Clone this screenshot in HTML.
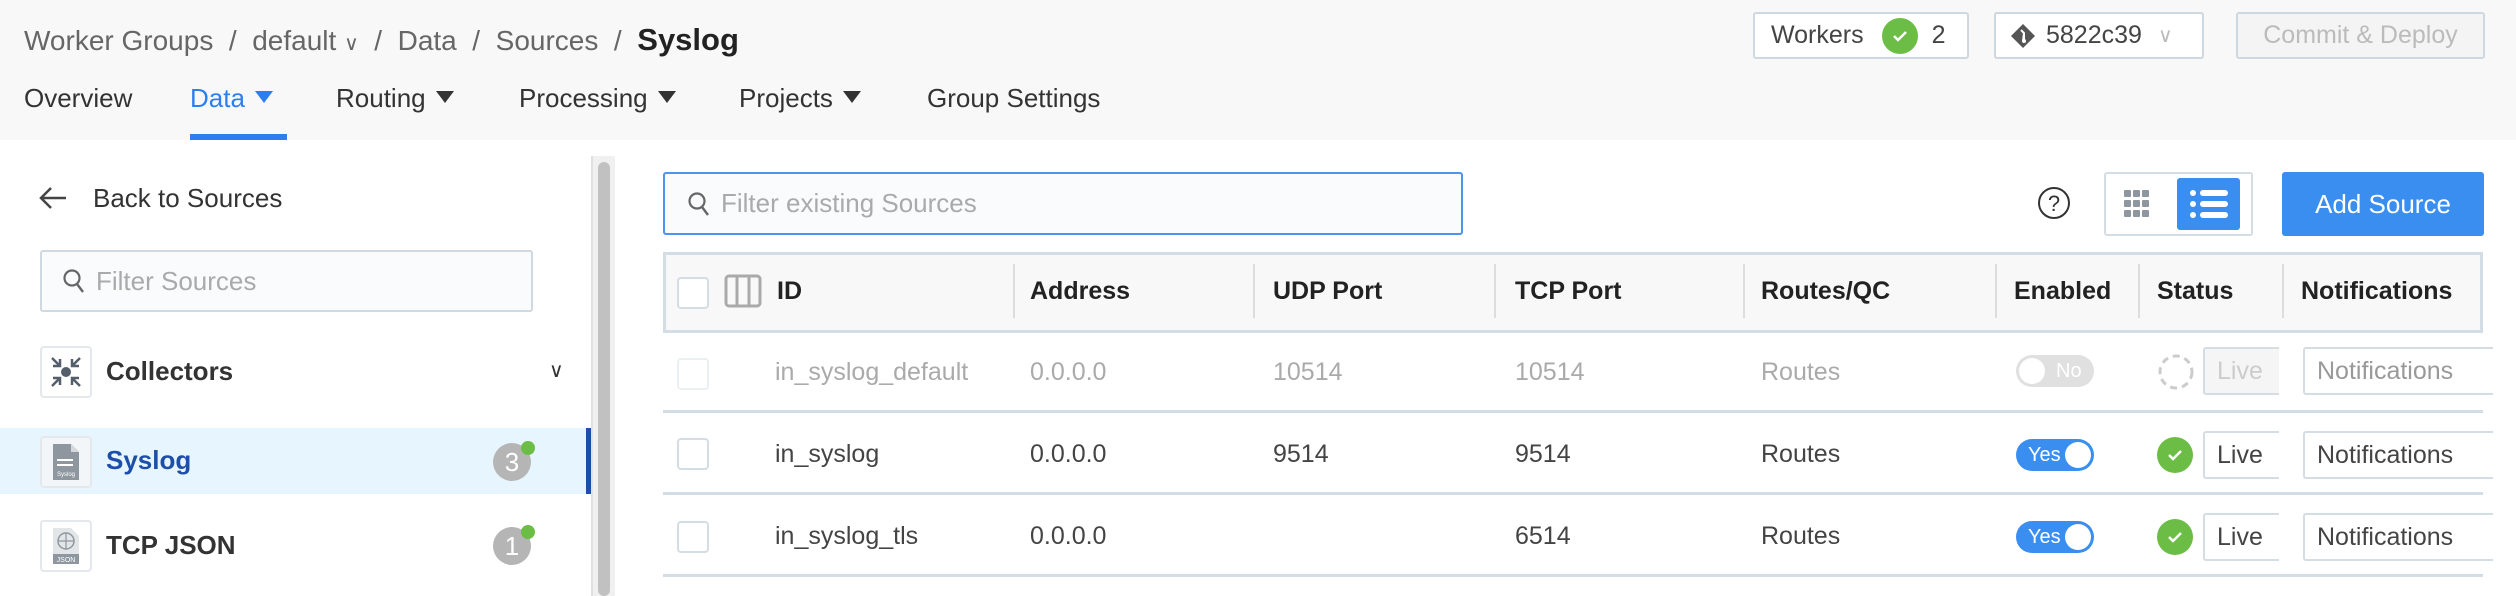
<!DOCTYPE html>
<html><head><meta charset="utf-8"><style>
*{box-sizing:border-box;margin:0;padding:0}
body{width:2516px;height:596px;overflow:hidden;background:#fff;font-family:"Liberation Sans",sans-serif;color:#444;position:relative}
.a{position:absolute}
.top{left:0;top:0;width:2516px;height:140px;background:#f8f8f8}
.bc{font-size:28px;color:#666;top:22px;left:24px;white-space:nowrap}
.bc b{color:#222;font-size:31px}
.tab{top:83px;font-size:26px;color:#333;white-space:nowrap}
.tri{display:inline-block;width:0;height:0;border-left:9px solid transparent;border-right:9px solid transparent;border-top:12px solid #333;margin-left:10px;vertical-align:4px}
.btn{border:2px solid #cfd8e0;border-radius:3px;background:#fff;font-size:25px;display:flex;align-items:center}
.chk{width:36px;height:36px;border-radius:50%;background:#6cbd45;display:inline-flex;align-items:center;justify-content:center}
.inp{border:2px solid #d0d8e0;border-radius:3px;background:#f9fbfd;font-size:26px;color:#aaa;display:flex;align-items:center}
.th{font-size:25px;color:#222;font-weight:bold;top:277px}
.sep{width:2px;height:54px;background:#ddd;top:264px}
.hl{height:3px;background:#d5dde4;left:663px;width:1820px}
.td{font-size:25px;color:#444}
.cb{width:32px;height:32px;border:2px solid #d5dde4;border-radius:4px;background:#fff}
.tg{width:78px;height:32px;border-radius:16px;background:#3a8ef0;color:#fff;font-size:20px;padding-left:12px;line-height:32px}
.tg i{position:absolute;right:3px;top:3px;width:26px;height:26px;border-radius:50%;background:#fff}
.lv{width:76px;height:48px;border:2px solid #d5dde4;border-right:none;border-radius:3px 0 0 3px;font-size:25px;padding-left:12px;line-height:44px;background:#fff}
.nt{width:190px;height:48px;border:2px solid #d5dde4;border-right:none;border-radius:3px 0 0 3px;font-size:25px;padding-left:12px;line-height:44px;background:#fff}
.ib{width:52px;height:52px;border:2px solid #e4e8ec;border-radius:4px;background:#fff;display:flex;align-items:center;justify-content:center}
.badge{width:38px;height:38px;border-radius:50%;background:#b5b5b5;color:#fff;font-size:26px;text-align:center;line-height:38px}
.badge i{position:absolute;right:-4px;top:-2px;width:14px;height:14px;border-radius:50%;background:#6cbd45}
</style></head><body>
<div class="a top"></div>
<div class="a bc">Worker Groups &nbsp;/ &nbsp;default <span style="font-size:20px">&#8744;</span> &nbsp;/ &nbsp;Data &nbsp;/ &nbsp;Sources &nbsp;/ &nbsp;<b>Syslog</b></div>
<div class="a tab" style="left:24px">Overview</div>
<div class="a tab" style="left:190px;color:#2d7ff0">Data<span class="tri" style="border-top-color:#2d7ff0"></span></div>
<div class="a" style="left:190px;top:134px;width:97px;height:6px;background:#2d7ff0"></div>
<div class="a tab" style="left:336px">Routing<span class="tri"></span></div>
<div class="a tab" style="left:519px">Processing<span class="tri"></span></div>
<div class="a tab" style="left:739px">Projects<span class="tri"></span></div>
<div class="a tab" style="left:927px">Group Settings</div>

<div class="a btn" style="left:1753px;top:12px;width:216px;height:47px;padding-left:16px;color:#444">Workers<span class="chk" style="margin:0 14px 0 18px"><svg width="18" height="14" viewBox="0 0 18 14"><path d="M3 7l4 4 8-8" stroke="#fff" stroke-width="2.5" fill="none"/></svg></span>2</div>
<div class="a btn" style="left:1994px;top:12px;width:210px;height:47px;padding-left:14px;color:#444"><svg width="26" height="26" viewBox="0 0 26 26"><path d="M13 1l12 12-12 12L1 13z" fill="#555"/><path d="M11 7l3 3v8M14 10l-1 8" stroke="#fff" stroke-width="2" fill="none"/><circle cx="14" cy="18" r="2" fill="#fff"/></svg><span style="margin-left:10px">5822c39</span><span style="margin-left:16px;color:#bbb;font-size:20px">&#8744;</span></div>
<div class="a btn" style="left:2236px;top:12px;width:249px;height:47px;background:#f4f4f4;color:#bbb;justify-content:center">Commit &amp; Deploy</div>

<!-- sidebar -->
<svg class="a" style="left:38px;top:184px" width="30" height="28" viewBox="0 0 30 28"><path d="M28 14H4M13 4L3 14l10 10" stroke="#444" stroke-width="2.5" fill="none"/></svg>
<div class="a" style="left:93px;top:183px;font-size:26px;color:#333">Back to Sources</div>
<div class="a inp" style="left:40px;top:250px;width:493px;height:62px;padding-left:20px"><svg width="24" height="26" viewBox="0 0 24 26"><circle cx="10" cy="10" r="7.5" stroke="#666" stroke-width="2.2" fill="none"/><path d="M15 16l6 8" stroke="#666" stroke-width="2.4"/></svg><span style="margin-left:10px">Filter Sources</span></div>

<div class="a ib" style="left:40px;top:346px"><svg width="36" height="36" viewBox="0 0 36 36" stroke="#555f6b" stroke-width="2.5" fill="none"><circle cx="18" cy="18" r="5" fill="#555f6b" stroke="none"/><path d="M4 4l8 8M12 5v7H5M32 4l-8 8M24 5v7h7M4 32l8-8M12 31v-7H5M32 32l-8-8M24 31v-7h7"/></svg></div>
<div class="a" style="left:106px;top:356px;font-size:26px;font-weight:bold;color:#333">Collectors</div>
<div class="a" style="left:549px;top:358px;font-size:20px;color:#333">&#8744;</div>

<div class="a" style="left:0;top:428px;width:590px;height:66px;background:#e7f5fe"></div>
<div class="a" style="left:586px;top:428px;width:5px;height:66px;background:#1d4fa8"></div>
<div class="a ib" style="left:40px;top:436px;background:#f3f6f9"><svg width="30" height="40" viewBox="0 0 30 40"><path d="M2 2h18l8 8v28H2z" fill="#8e979f"/><path d="M20 2v8h8" fill="#d5d9dd"/><path d="M6 18h16M6 23h16" stroke="#fff" stroke-width="2"/><text x="15" y="34" font-size="6" fill="#fff" text-anchor="middle" font-family="Liberation Sans">Syslog</text></svg></div>
<div class="a" style="left:106px;top:445px;font-size:26px;font-weight:bold;color:#1d4fa8">Syslog</div>
<div class="a badge" style="left:493px;top:443px">3<i></i></div>

<div class="a ib" style="left:40px;top:520px"><svg width="30" height="40" viewBox="0 0 30 40"><path d="M2 2h18l8 8v28H2z" fill="#e3e6e9"/><circle cx="15" cy="15" r="8" stroke="#8e979f" stroke-width="1.5" fill="none"/><path d="M7 15h16M15 7v16" stroke="#8e979f" stroke-width="1.2"/><rect x="2" y="28" width="26" height="10" fill="#8e979f"/><text x="15" y="36" font-size="7" fill="#fff" text-anchor="middle" font-family="Liberation Sans">JSON</text></svg></div>
<div class="a" style="left:106px;top:530px;font-size:26px;font-weight:bold;color:#333">TCP JSON</div>
<div class="a badge" style="left:493px;top:527px">1<i></i></div>

<div class="a" style="left:591px;top:156px;width:24px;height:440px;background:#f0f0f0;border-left:2px solid #e0e0e0"></div>
<div class="a" style="left:598px;top:162px;width:12px;height:434px;background:#c1c1c1;border-radius:6px"></div>

<!-- main -->
<div class="a inp" style="left:663px;top:172px;width:800px;height:63px;border-color:#4a95f0;padding-left:22px"><svg width="24" height="26" viewBox="0 0 24 26"><circle cx="10" cy="10" r="7.5" stroke="#666" stroke-width="2.2" fill="none"/><path d="M15 16l6 8" stroke="#666" stroke-width="2.4"/></svg><span style="margin-left:10px">Filter existing Sources</span></div>
<svg class="a" style="left:2036px;top:185px" width="36" height="36" viewBox="0 0 36 36"><circle cx="18" cy="18" r="15" stroke="#333" stroke-width="2" fill="none"/><text x="18" y="26" font-size="22" text-anchor="middle" fill="#333" font-family="Liberation Sans">?</text></svg>
<div class="a" style="left:2104px;top:172px;width:149px;height:64px;border:2px solid #d5dde4;border-radius:3px;background:#fff"></div>
<svg class="a" style="left:2124px;top:190px" width="26" height="28" viewBox="0 0 26 28" fill="#8e979f"><rect x="0" y="0" width="7" height="7" rx="1"/><rect x="9" y="0" width="7" height="7" rx="1"/><rect x="18" y="0" width="7" height="7" rx="1"/><rect x="0" y="10" width="7" height="7" rx="1"/><rect x="9" y="10" width="7" height="7" rx="1"/><rect x="18" y="10" width="7" height="7" rx="1"/><rect x="0" y="20" width="7" height="7" rx="1"/><rect x="9" y="20" width="7" height="7" rx="1"/><rect x="18" y="20" width="7" height="7" rx="1"/></svg>
<div class="a" style="left:2177px;top:178px;width:63px;height:52px;background:#3a8ef0;border-radius:3px"></div>
<svg class="a" style="left:2190px;top:189px" width="38" height="30" viewBox="0 0 38 30" fill="#fff"><circle cx="3" cy="4" r="3"/><circle cx="3" cy="15" r="3"/><circle cx="3" cy="26" r="3"/><rect x="10" y="1" width="28" height="6" rx="3"/><rect x="10" y="12" width="28" height="6" rx="3"/><rect x="10" y="23" width="28" height="6" rx="3"/></svg>
<div class="a" style="left:2282px;top:172px;width:202px;height:64px;background:#3a8ef0;border-radius:3px;color:#fff;font-size:26px;text-align:center;line-height:64px">Add Source</div>

<div class="a" style="left:663px;top:252px;width:1820px;height:80px;background:#f8f8f8;border:3px solid #d5dde4;border-bottom:none"></div>
<div class="a hl" style="top:330px"></div>
<div class="a cb" style="left:677px;top:277px"></div>
<svg class="a" style="left:724px;top:274px" width="38" height="34" viewBox="0 0 38 34"><rect x="2" y="2" width="34" height="30" rx="3" stroke="#aaa" stroke-width="3" fill="none"/><path d="M13 2v30M25 2v30" stroke="#aaa" stroke-width="3"/></svg>
<div class="a th" style="left:777px">ID</div>
<div class="a sep" style="left:1013px"></div><div class="a th" style="left:1030px">Address</div>
<div class="a sep" style="left:1253px"></div><div class="a th" style="left:1273px">UDP Port</div>
<div class="a sep" style="left:1494px"></div><div class="a th" style="left:1515px">TCP Port</div>
<div class="a sep" style="left:1743px"></div><div class="a th" style="left:1761px">Routes/QC</div>
<div class="a sep" style="left:1995px"></div><div class="a th" style="left:2014px">Enabled</div>
<div class="a sep" style="left:2138px"></div><div class="a th" style="left:2157px">Status</div>
<div class="a sep" style="left:2282px"></div><div class="a th" style="left:2301px">Notifications</div>

<!-- row1 -->
<div class="a cb" style="left:677px;top:358px;border-color:#eceff2"></div>
<div class="a td" style="left:775px;top:358px;color:#aaa">in_syslog_default</div>
<div class="a td" style="left:1030px;top:358px;color:#aaa">0.0.0.0</div>
<div class="a td" style="left:1273px;top:358px;color:#aaa">10514</div>
<div class="a td" style="left:1515px;top:358px;color:#aaa">10514</div>
<div class="a td" style="left:1761px;top:358px;color:#aaa">Routes</div>
<div class="a tg" style="left:2016px;top:355px;background:#e0e0e0;padding-left:40px"><i style="left:3px;right:auto"></i>No</div>
<svg class="a" style="left:2157px;top:353px" width="38" height="38" viewBox="0 0 38 38"><circle cx="19" cy="19" r="16" stroke="#ccc" stroke-width="3" fill="none" stroke-dasharray="7 5"/></svg>
<div class="a lv" style="left:2203px;top:347px;background:#f5f5f5;color:#ccc">Live</div>
<div class="a nt" style="left:2303px;top:347px;color:#999">Notifications</div>
<div class="a hl" style="top:410px"></div>

<!-- row2 -->
<div class="a cb" style="left:677px;top:438px"></div>
<div class="a td" style="left:775px;top:440px">in_syslog</div>
<div class="a td" style="left:1030px;top:440px">0.0.0.0</div>
<div class="a td" style="left:1273px;top:440px">9514</div>
<div class="a td" style="left:1515px;top:440px">9514</div>
<div class="a td" style="left:1761px;top:440px">Routes</div>
<div class="a tg" style="left:2016px;top:439px">Yes<i></i></div>
<span class="a chk" style="left:2157px;top:437px"><svg width="18" height="14" viewBox="0 0 18 14"><path d="M3 7l4 4 8-8" stroke="#fff" stroke-width="2.5" fill="none"/></svg></span>
<div class="a lv" style="left:2203px;top:431px">Live</div>
<div class="a nt" style="left:2303px;top:431px">Notifications</div>
<div class="a hl" style="top:492px"></div>

<!-- row3 -->
<div class="a cb" style="left:677px;top:521px"></div>
<div class="a td" style="left:775px;top:522px">in_syslog_tls</div>
<div class="a td" style="left:1030px;top:522px">0.0.0.0</div>
<div class="a td" style="left:1515px;top:522px">6514</div>
<div class="a td" style="left:1761px;top:522px">Routes</div>
<div class="a tg" style="left:2016px;top:521px">Yes<i></i></div>
<span class="a chk" style="left:2157px;top:519px"><svg width="18" height="14" viewBox="0 0 18 14"><path d="M3 7l4 4 8-8" stroke="#fff" stroke-width="2.5" fill="none"/></svg></span>
<div class="a lv" style="left:2203px;top:513px">Live</div>
<div class="a nt" style="left:2303px;top:513px">Notifications</div>
<div class="a hl" style="top:574px"></div>
</body></html>
